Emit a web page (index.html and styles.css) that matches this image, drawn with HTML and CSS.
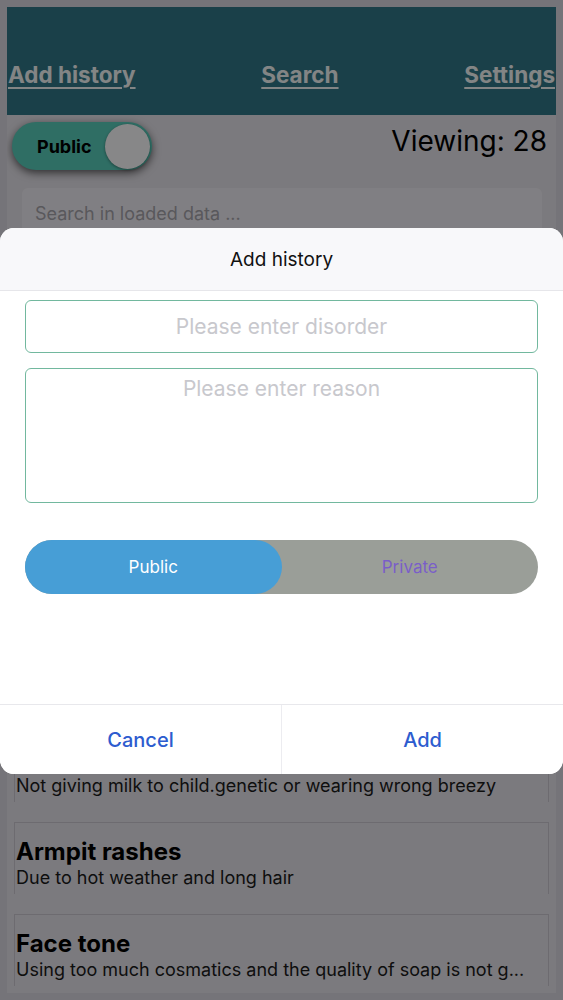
FILE: index.html
```html
<!DOCTYPE html>
<html lang="en">
<head>
    <meta charset="UTF-8">
    <meta name="viewport" content="width=device-width, initial-scale=1">
    <title>History</title>
    <link rel="stylesheet" href="styles.css">
</head>
<body>

<div class="app">
    <nav class="topbar">
        <a href="#" class="nav-link">Add history</a>
        <a href="#" class="nav-link">Search</a>
        <a href="#" class="nav-link">Settings</a>
    </nav>

    <div class="toolbar">
        <div class="switch">
            <span class="switch-label">Public</span>
            <span class="switch-knob"></span>
        </div>
        <div class="viewing">Viewing: 28</div>
    </div>

    <input class="search" type="text" placeholder="Search in loaded data ...">

    <div class="list">
        <div class="card">
            <div class="card-title">Headache</div>
            <div class="card-desc">Too much screen time and less sleep</div>
        </div>
        <div class="card">
            <div class="card-title">Back pain</div>
            <div class="card-desc">Sitting in wrong posture for long hours</div>
        </div>
        <div class="card">
            <div class="card-title">Cough</div>
            <div class="card-desc">Cold drinks and dust allergy</div>
        </div>
        <div class="card">
            <div class="card-title">Hair fall</div>
            <div class="card-desc">Stress and lack of proteins in diet</div>
        </div>
        <div class="card">
            <div class="card-title">Acidity</div>
            <div class="card-desc">Eating spicy food late at night</div>
        </div>
        <div class="card">
            <div class="card-title">Baby rashes</div>
            <div class="card-desc">Not giving milk to child.genetic or wearing wrong breezy</div>
        </div>
        <div class="card">
            <div class="card-title">Armpit rashes</div>
            <div class="card-desc">Due to hot weather and long hair</div>
        </div>
        <div class="card">
            <div class="card-title">Face tone</div>
            <div class="card-desc">Using too much cosmatics and the quality of soap is not g...</div>
        </div>
    </div>
</div>

<div class="overlay">
    <div class="dialog">
        <div class="dialog-header">Add history</div>
        <div class="dialog-body">
            <input class="field" type="text" placeholder="Please enter disorder">
            <textarea class="field field-area" placeholder="Please enter reason"></textarea>
            <div class="segment">
                <div class="segment-item active">Public</div>
                <div class="segment-item">Private</div>
            </div>
        </div>
        <div class="dialog-footer">
            <button class="dialog-btn">Cancel</button>
            <button class="dialog-btn">Add</button>
        </div>
    </div>
</div>

</body>
</html>
```

FILE: styles.css
```css
body {
    font-family: Inter, Roboto, "Noto Sans", sans-serif;
    margin: 0;
    background-color: #d6d4dc;
    color: #000;
}
.app {
    margin: 7px;
    height: 986px;
    overflow: hidden;
    background-color: #e0dee5;
    display: flex;
    flex-direction: column;
}
.topbar {
    height: 108px;
    flex-shrink: 0;
    box-sizing: border-box;
    padding: 0 1px 27px;
    background-color: #317585;
    display: flex;
    justify-content: space-between;
    align-items: flex-end;
}
.nav-link {
    color: #eef2f3;
    font-size: 22.5px;
    font-weight: 700;
    line-height: 26px;
    text-decoration: underline;
    text-underline-offset: 4px;
}
.toolbar {
    display: flex;
    justify-content: space-between;
    align-items: flex-start;
    padding: 7px 9px 0 5px;
}
.switch {
    width: 140px;
    height: 48px;
    box-sizing: border-box;
    border-radius: 24px;
    background-color: #56c8b7;
    box-shadow: 0 3px 8px rgba(0, 0, 0, 0.6);
    display: flex;
    align-items: center;
    justify-content: space-between;
    padding: 0 2px 0 25px;
}
.switch-label {
    font-size: 18px;
    font-weight: 700;
}
.switch-knob {
    width: 45px;
    height: 45px;
    border-radius: 50%;
    background-color: #f6f6f8;
    box-shadow: 0 1px 3px rgba(0, 0, 0, 0.4);
}
.viewing {
    font-size: 28px;
    line-height: 38px;
}
.search {
    margin: 18px 14px 0 15px;
    height: 50px;
    flex-shrink: 0;
    box-sizing: border-box;
    border: none;
    border-radius: 6px;
    padding: 0 13px;
    background-color: #eae8ee;
    font-family: inherit;
    font-size: 18px;
}
.search::placeholder {
    color: #a2a1a8;
}
.list {
    padding: 32px 7px 0;
    display: flex;
    flex-direction: column;
    gap: 20px;
}
.card {
    height: 72px;
    flex-shrink: 0;
    box-sizing: border-box;
    padding: 15px 1px 0;
    border: 1px solid #c6c4cc;
    border-bottom: none;
}
.card-title {
    font-size: 24px;
    font-weight: 700;
    line-height: 28px;
}
.card-desc {
    font-size: 18px;
    line-height: 23px;
    color: #1a1a1a;
    white-space: nowrap;
}
.overlay {
    position: fixed;
    inset: 0;
    background-color: rgba(0, 0, 0, 0.45);
    padding-top: 228px;
}
.dialog {
    background-color: #fff;
    border-radius: 14px;
    overflow: hidden;
}
.dialog-header {
    height: 62px;
    line-height: 64px;
    text-align: center;
    font-size: 19px;
    color: #111;
    background-color: #f8f8fa;
    border-bottom: 1px solid #e6e6ea;
}
.dialog-body {
    padding: 9px 25px 110px;
    display: flex;
    flex-direction: column;
}
.field {
    height: 53px;
    box-sizing: border-box;
    border: 1.5px solid #72b89e;
    border-radius: 6px;
    font-family: inherit;
    font-size: 21px;
    text-align: center;
    outline: none;
    resize: none;
}
.field::placeholder {
    color: #c8c8cd;
}
.field-area {
    height: 135px;
    margin-top: 15px;
    padding-top: 7px;
}
.segment {
    margin-top: 37px;
    height: 54px;
    border-radius: 27px;
    background-color: #9a9e98;
    display: flex;
}
.segment-item {
    flex: 1;
    display: flex;
    align-items: center;
    justify-content: center;
    border-radius: 27px;
    font-size: 17px;
    color: #7a5ec8;
}
.segment-item.active {
    background-color: #479ed6;
    color: #fff;
}
.dialog-footer {
    display: flex;
    border-top: 1px solid #e8e8ec;
}
.dialog-btn {
    flex: 1;
    height: 69px;
    border: none;
    background: #fff;
    font-family: inherit;
    font-size: 20px;
    font-weight: 500;
    color: #2d5ccf;
    cursor: pointer;
}
.dialog-btn + .dialog-btn {
    border-left: 1px solid #ececf0;
}
```
